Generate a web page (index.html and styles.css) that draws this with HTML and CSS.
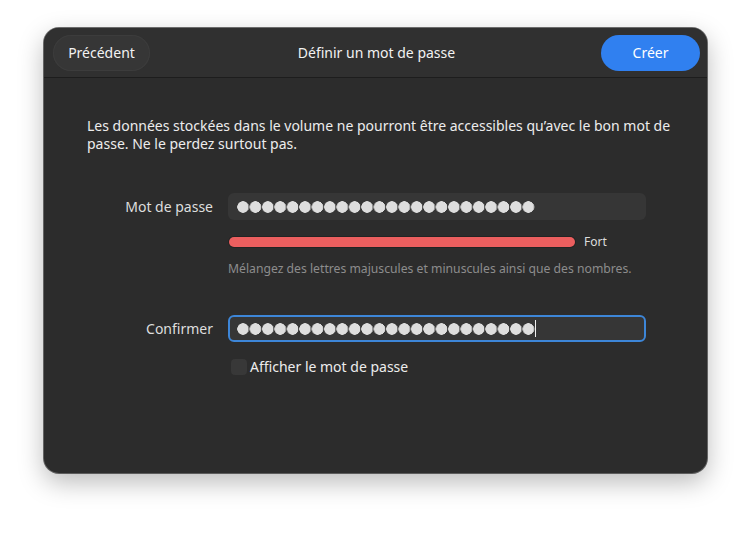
FILE: index.html
```html
<!DOCTYPE html>
<html lang="fr">
<head>
  <meta charset="UTF-8" />
  <meta name="viewport" content="width=device-width, initial-scale=1.0" />
  <title>Définir un mot de passe</title>
  <link rel="stylesheet" href="styles.css">
</head>
<body>
  <div class="dialog">
    <div class="headerbar">
      <button class="btn btn-back">Précédent</button>
      <span class="title">Définir un mot de passe</span>
      <button class="btn btn-create">Créer</button>
    </div>

    <div class="content">
      <p class="intro">Les données stockées dans le volume ne pourront être accessibles qu’avec le bon mot de passe. Ne le perdez surtout pas.</p>

      <div class="form">
        <label class="label">Mot de passe</label>
        <div class="entry">
          <span class="dots"></span>
        </div>

        <span></span>
        <div class="strength">
          <div class="level"><div class="level-fill"></div></div>
          <span class="level-text">Fort</span>
        </div>

        <span></span>
        <p class="hint">Mélangez des lettres majuscules et minuscules ainsi que des nombres.</p>

        <label class="label label-confirm">Confirmer</label>
        <div class="entry entry-focus">
          <span class="dots"></span>
          <span class="caret"></span>
        </div>

        <span></span>
        <label class="check">
          <span class="check-box"></span>
          Afficher le mot de passe
        </label>
      </div>
    </div>
  </div>
</body>
</html>
```

FILE: styles.css
```css
body {
  margin: 0;
  padding: 28px 44px 60px;
  background: #ffffff;
  font-family: "Noto Sans", sans-serif;
  font-size: 14px;
  color: #ececec;
}

.dialog {
  width: 663px;
  height: 445px;
  border-radius: 15px;
  background: #2c2c2c;
  overflow: hidden;
  box-shadow: 0 0 0 1px rgba(0, 0, 0, 0.55), 0 9px 26px rgba(0, 0, 0, 0.28);
}

.headerbar {
  height: 49px;
  display: grid;
  grid-template-columns: 1fr auto 1fr;
  align-items: center;
  padding: 0 7px 0 9px;
  background: #303030;
  border-bottom: 1px solid #1d1d1d;
}
.title {
  font-size: 14px;
  color: #f2f2f2;
}

.btn {
  height: 36px;
  border: none;
  border-radius: 18px;
  font-family: inherit;
  font-size: 14px;
  color: #f2f2f2;
  cursor: pointer;
}
.btn-back {
  justify-self: start;
  width: 97px;
  background: #363636;
  box-shadow: inset 0 0 0 1px #3c3c3c;
}
.btn-create {
  justify-self: end;
  width: 99px;
  background: #3080f0;
  color: #ffffff;
}

.content {
  padding: 39px 25px 0 43px;
}
.intro {
  margin: 0;
  line-height: 18px;
}

.form {
  display: grid;
  grid-template-columns: 126px 418px;
  column-gap: 15px;
  margin-top: 40px;
}
.label {
  text-align: right;
  line-height: 27px;
  color: #dedede;
}
.label-confirm {
  margin-top: 38px;
}

.entry {
  height: 27px;
  display: flex;
  align-items: center;
  padding: 0 9px;
  border-radius: 6px;
  background: #363636;
  box-sizing: border-box;
}
.entry-focus {
  margin-top: 38px;
  border: 2px solid #3d86d8;
  padding: 0 7px;
}
.dots {
  width: 298px;
  height: 12px;
  background: radial-gradient(circle at 6px 6px, #dedede 5.5px, transparent 6px) 0 0 / 12.42px 12px repeat-x;
}
.caret {
  width: 1px;
  height: 17px;
  background: #f0f0f0;
}

.strength {
  display: flex;
  align-items: center;
  margin-top: 13px;
  gap: 8px;
}
.level {
  width: 348px;
  height: 12px;
  padding: 1px;
  border-radius: 6px;
  background: #232323;
  box-sizing: border-box;
}
.level-fill {
  height: 100%;
  border-radius: 5px;
  background: #ec5f5f;
}
.level-text {
  font-size: 12px;
  color: #dcdcdc;
}

.hint {
  margin: 10px 0 0;
  font-size: 12.2px;
  color: #8d8d8d;
}

.check {
  display: flex;
  align-items: center;
  margin-top: 15px;
  margin-left: 3px;
  gap: 3px;
  color: #ececec;
}
.check-box {
  width: 16px;
  height: 16px;
  border-radius: 4px;
  background: #383838;
}
```
